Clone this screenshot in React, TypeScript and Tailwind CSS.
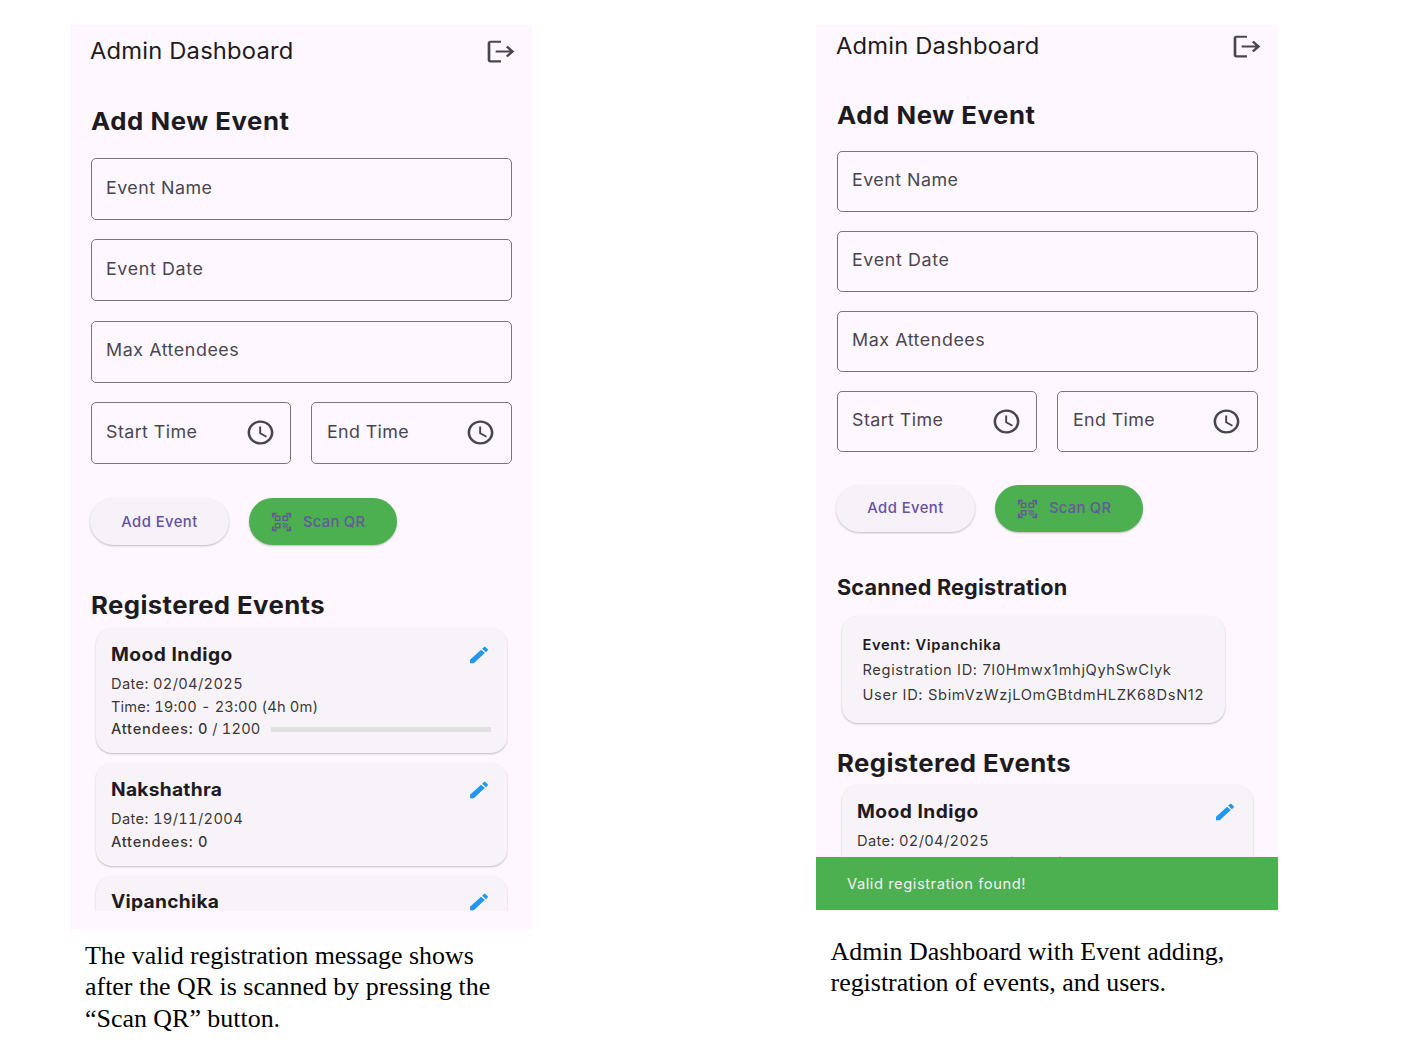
import React from "react";

type Variant = "tall" | "short";

function LogoutIcon() {
  return (
    <svg viewBox="0 0 24 24" preserveAspectRatio="none" className="h-[29px] w-[32px] fill-[#49454f]">
      <path d="M17 7.200l-1.300 1.300L18.400 11.150H8v1.700h10.400l-2.700 2.650L17 16.800l5-4.800zM4 4.800h8V3H4c-1.100 0-2 .9-2 2v14c0 1.100.9 2 2 2h8v-1.800H4V4.800z" />
    </svg>
  );
}

function ClockIcon() {
  return (
    <svg viewBox="0 0 24 24" preserveAspectRatio="none" className="h-[29px] w-[31px] fill-[#49454f]">
      <path d="M11.990 2C6.470 2 2 6.480 2 12s4.470 10 9.990 10C17.520 22 22 17.520 22 12S17.520 2 11.990 2zM12 20c-4.420 0-8-3.580-8-8s3.580-8 8-8 8 3.580 8 8-3.580 8-8 8zm.5-13H11v6l5.250 3.150.75-1.230-4.500-2.670z" />
    </svg>
  );
}

function QrIcon() {
  return (
    <svg viewBox="0 0 24 24" preserveAspectRatio="none" className="h-[22px] w-[23px] fill-[#6750a4] opacity-90">
      <path d="M9.5 6.5v3h-3v-3h3M11 5H5v6h6V5zm-1.500 9.500v3h-3v-3h3M11 13H5v6h6v-6zm6.500-6.500v3h-3v-3h3M19 5h-6v6h6V5zm-6 8h1.500v1.500H13V13zm1.500 1.500H16V16h-1.500v-1.500zM16 13h1.500v1.500H16V13zm-3 3h1.500v1.500H13V16zm1.500 1.500H16V19h-1.500v-1.500zM16 16h1.500v1.500H16V16zm1.500-1.500H19V16h-1.500v-1.500zm0 3H19V19h-1.500v-1.500zM22 7h-2V4h-3V2h5v5zm0 15v-5h-2v3h-3v2h5zM2 22h5v-2H4v-3H2v5zM2 2v5h2V4h3V2H2z" />
    </svg>
  );
}

function PencilIcon() {
  return (
    <svg viewBox="0 0 24 24" preserveAspectRatio="none" className="h-[22px] w-6 fill-[#2196f3]">
      <path d="M3 17.250V21h3.750L17.810 9.940l-3.750-3.750L3 17.250zM20.710 7.040c.39-.39.39-1.020 0-1.410l-2.340-2.340c-.39-.39-1.020-.39-1.410 0l-1.830 1.830 3.750 3.750 1.830-1.830z" />
    </svg>
  );
}

function Field({ label, tracking, variant, clock }: { label: string; tracking: string; variant: Variant; clock?: boolean }) {
  return (
    <div
      className={`flex min-w-0 flex-1 items-center justify-between rounded-[5px] border-[1.4px] border-[#79747e] pl-[14.500px] pr-[14.500px] ${
        variant === "tall" ? "h-[62px]" : "h-[61px]"
      }`}
    >
      <span className={`mb-[2.500px] origin-left scale-x-105 text-[17px] leading-6 whitespace-nowrap text-[#49454f] ${tracking}`}>{label}</span>
      {clock && <ClockIcon />}
    </div>
  );
}

function EventForm({ variant }: { variant: Variant }) {
  const tall = variant === "tall";
  return (
    <>
      <div className={`flex shrink-0 flex-col ${tall ? "gap-[19.300px]" : "gap-[19px]"}`}>
        <div className="flex">
          <Field label="Event Name" tracking="tracking-[0.450px]" variant={variant} />
        </div>
        <div className="flex">
          <Field label="Event Date" tracking="tracking-[0.600px]" variant={variant} />
        </div>
        <div className="flex">
          <Field label="Max Attendees" tracking="tracking-[0.530px]" variant={variant} />
        </div>
        <div className="flex gap-[20px]">
          <Field label="Start Time" tracking="tracking-[0.410px]" variant={variant} clock />
          <Field label="End Time" tracking="tracking-[0.350px]" variant={variant} clock />
        </div>
      </div>
      <div
        className={`-ml-[0.500px] flex shrink-0 gap-5 text-[14.800px] font-medium text-[#6750a4] ${
          tall ? "mt-[34px] h-[47.500px]" : "mt-[33px] h-[47px]"
        }`}
      >
        <button className="w-[139px] rounded-full bg-[#f7f2fa] tracking-[0.450px] shadow-[0_1px_2px_rgba(0,0,0,0.25)]">Add Event</button>
        <button className="flex w-[147.500px] items-center gap-[10px] rounded-full bg-[#4caf50] pl-[21px] shadow-[0_1px_2px_rgba(0,0,0,0.25)]">
          <QrIcon />
          <span className="tracking-[0.260px] opacity-90">Scan QR</span>
        </button>
      </div>
    </>
  );
}

function Heading({ className, children }: { className: string; children: React.ReactNode }) {
  return (
    <h2 className={`h-[31px] shrink-0 origin-left scale-x-106 text-[24.300px] leading-[31px] font-bold whitespace-nowrap ${className}`}>
      {children}
    </h2>
  );
}

function Card({ className, children }: { className: string; children: React.ReactNode }) {
  return (
    <div className={`shrink-0 rounded-[16px] bg-[#f7f3f9] shadow-[0_1px_2px_rgba(0,0,0,0.25)] ${className}`}>{children}</div>
  );
}

function EventTitle({ name, tracking }: { name: string; tracking: string }) {
  return (
    <div className="flex h-[26px] items-center justify-between pr-[16px]">
      <h3 className={`origin-left scale-x-105 text-[18.300px] leading-[26px] font-bold ${tracking}`}>{name}</h3>
      <span className="pt-[2px]">
        <PencilIcon />
      </span>
    </div>
  );
}

const row = "h-[22.700px] text-[14.700px] leading-[22.700px] whitespace-nowrap text-[#1d1b20]/90 tabular-nums";

export default function App() {
  return (
    <div className="flex h-[1055px] w-[1422px] gap-[284px] overflow-hidden bg-white pt-[25px] pl-[70px] font-['Inter',sans-serif] text-[#1d1b20]">
      <div className="w-[462px] shrink-0">
        <section className="flex h-[905px] flex-col bg-[#fef7ff] pr-[20.500px] pl-[20.500px]">
          <header className="-mr-[5px] flex h-[51px] shrink-0 items-center justify-between">
            <h1 className="-ml-[0.500px] origin-left scale-x-106 text-[22.400px] tracking-[0.180px]">Admin Dashboard</h1>
            <span className="pt-px">
              <LogoutIcon />
            </span>
          </header>
          <Heading className="mt-[30px] mb-[21px] tracking-[0.530px]">Add New Event</Heading>
          <EventForm variant="tall" />
          <Heading className="mt-[45px] tracking-[0.370px]">Registered Events</Heading>
          <div className="mt-[5px] flex h-[284.500px] flex-col gap-[10px] overflow-hidden px-[5px] pt-[2px]">
            <Card className="h-[125px] pt-[12.500px] pl-[15.500px]">
              <EventTitle name="Mood Indigo" tracking="tracking-[0.450px]" />
              <div className="mt-[6px]">
                <p className={`${row} tracking-[0.330px]`}>Date: 02/04/2025</p>
                <p className={`${row} tracking-[0.130px]`}>Time: 19:00 - 23:00 (4h 0m)</p>
                <div className="flex items-center pr-[15.500px]">
                  <p className={row}>
                    <span className="font-medium tracking-[0.720px]">Attendees: 0</span>{" "}
                    <span className="tracking-[0.150px]">/ 1200</span>
                  </p>
                  <div className="ml-auto h-[5px] w-[220.500px] bg-[#e0e0e0]" />
                </div>
              </div>
            </Card>
            <Card className="h-[102.500px] pt-[12.500px] pl-[15.500px]">
              <EventTitle name="Nakshathra" tracking="tracking-[0.250px]" />
              <div className="mt-[6px]">
                <p className={`${row} tracking-[0.330px]`}>Date: 19/11/2004</p>
                <p className={`${row} font-medium tracking-[0.720px]`}>Attendees: 0</p>
              </div>
            </Card>
            <Card className="h-[102.500px] pt-[12.500px] pl-[15.500px]">
              <EventTitle name="Vipanchika" tracking="tracking-[0.250px]" />
            </Card>
          </div>
        </section>
        <p className="mt-[10px] pl-[15px] font-['Liberation_Serif',serif] text-[25.930px] leading-[31.300px] whitespace-nowrap text-black">
          The valid registration message shows
          <br />
          after the QR is scanned by pressing the
          <br />
          “Scan QR” button.
        </p>
      </div>

      <div className="w-[462px] shrink-0">
        <section className="flex h-[885px] flex-col bg-[#fef7ff]">
          <div className="flex h-[832px] flex-col overflow-hidden px-[20.500px]">
            <header className="-mr-[5px] flex h-[41px] shrink-0 items-center justify-between">
              <h1 className="-ml-[0.500px] origin-left scale-x-106 text-[22.400px] tracking-[0.180px]">Admin Dashboard</h1>
              <span className="pt-px">
                <LogoutIcon />
              </span>
            </header>
            <Heading className="mt-[33.500px] mb-[20.500px] tracking-[0.530px]">Add New Event</Heading>
            <EventForm variant="short" />
            <h2 className="mt-[41px] h-[29px] shrink-0 origin-left scale-x-103 text-[21px] leading-[29px] font-bold tracking-[0.200px] whitespace-nowrap">
              Scanned Registration
            </h2>
            <Card className="mt-[14px] ml-[5px] h-[107px] w-[383.500px] pt-[17px] pl-[21px]">
              <p className="text-[14.700px] leading-[24.800px] font-semibold tracking-[0.640px] whitespace-nowrap">Event: Vipanchika</p>
              <p className="text-[14.700px] leading-[24.800px] tracking-[0.610px] whitespace-nowrap text-[#1d1b20]/90">
                Registration ID: 7I0Hmwx1mhjQyhSwClyk
              </p>
              <p className="text-[14.700px] leading-[24.800px] tracking-[0.630px] whitespace-nowrap text-[#1d1b20]/90">
                User ID: SbimVzWzjLOmGBtdmHLZK68DsN12
              </p>
            </Card>
            <Heading className="mt-[25px] tracking-[0.370px]">Registered Events</Heading>
            <div className="px-[5px] pt-[6px]">
              <Card className="h-[123px] pt-[12.500px] pl-[15.500px]">
                <EventTitle name="Mood Indigo" tracking="tracking-[0.450px]" />
                <div className="mt-[6px]">
                  <p className={`${row} tracking-[0.330px]`}>Date: 02/04/2025</p>
                  <p className={`${row} tracking-[0.130px]`}>Time: 19:00 - 23:00 (4h 0m)</p>
                </div>
              </Card>
            </div>
          </div>
          <div className="flex h-[53px] shrink-0 items-center bg-[#4caf50] pt-px pl-[31px] text-[14.700px] tracking-[0.560px] text-[#f5eff7]">
            Valid registration found!
          </div>
        </section>
        <p className="mt-[26px] pl-[14.500px] font-['Liberation_Serif',serif] text-[25.930px] leading-[31.300px] whitespace-nowrap text-black">
          Admin Dashboard with Event adding,
          <br />
          registration of events, and users.
        </p>
      </div>
    </div>
  );
}
